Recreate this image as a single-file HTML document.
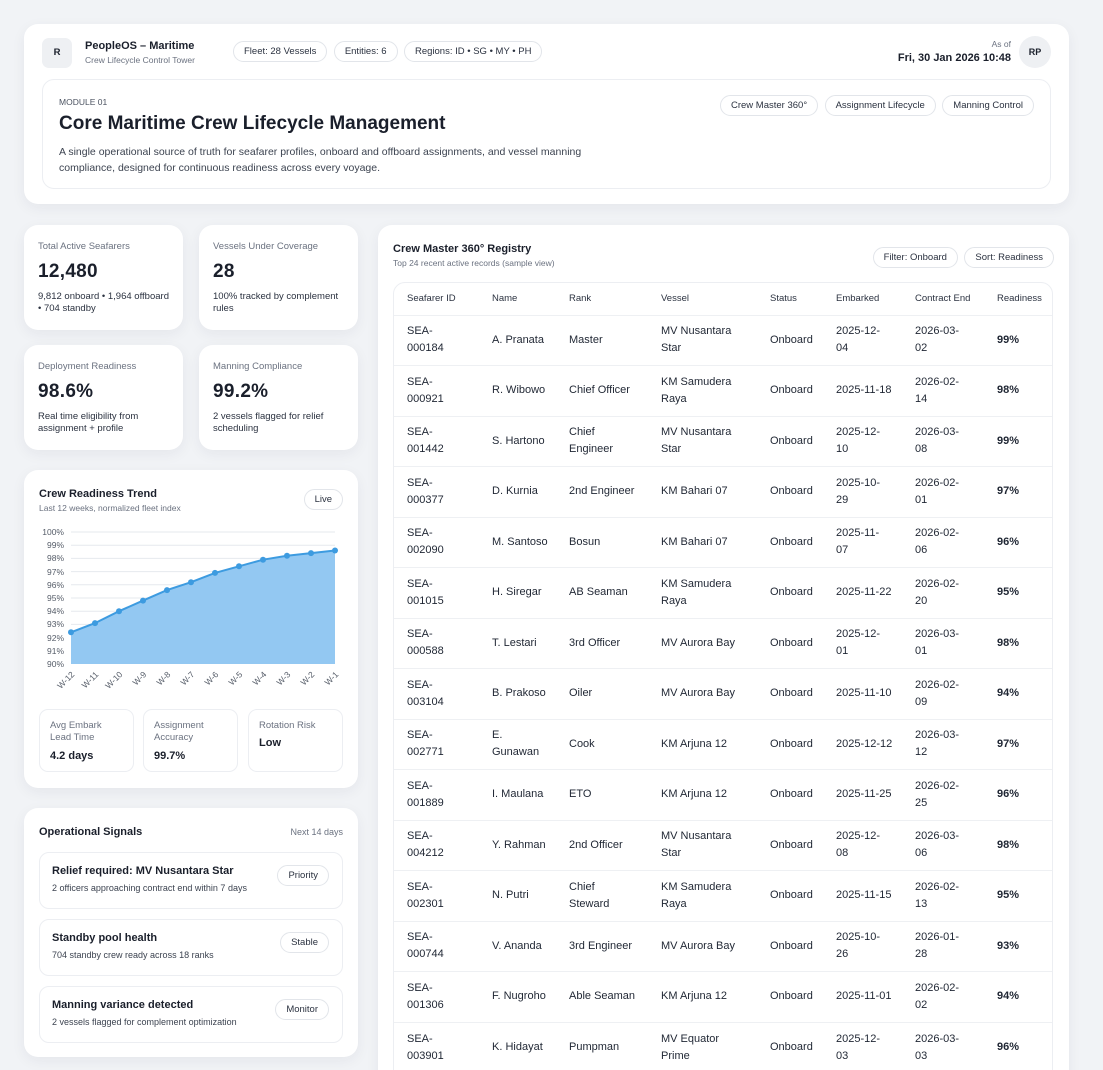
<!DOCTYPE html>
<html><head><meta charset="utf-8"><style>
*{box-sizing:border-box;margin:0;padding:0}
html,body{width:1103px;height:1070px;overflow:hidden}
body{background:#f1f3f6;font-family:"Liberation Sans",sans-serif;color:#1a1f2b;position:relative}
.card{position:absolute;background:#fff;border-radius:14px;box-shadow:0 4px 14px rgba(30,40,60,.06)}
.pill{display:inline-block;border:1px solid #e2e5ea;border-radius:14px;font-size:9.5px;color:#2b3240;padding:0 10px;height:21px;line-height:19px;background:#fff}
.abs{position:absolute}
.muted{color:#6b7280}
.stat{width:159px;height:105px;padding:16px 14px}
.stat .l{font-size:9.5px;color:#6b7280}
.stat .v{font-size:19px;font-weight:bold;margin-top:9px;letter-spacing:.3px}
.stat .s{font-size:9.5px;color:#2b3240;margin-top:8px;line-height:12px}
table{border-collapse:collapse;font-size:11px;color:#1f2633}
th{font-size:9.5px;font-weight:normal;color:#2b3240;text-align:left;height:32px;padding:0}
td{height:50.5px;border-top:1px solid #eef0f3;line-height:17px;padding:0}
.sig{position:absolute;left:15px;width:304px;height:57px;border:1px solid #eceef2;border-radius:10px;padding:0 12px}
.sig b{display:block;font-size:11px;margin-top:12px}
.sig span{font-size:9px;color:#3c4350;display:block;margin-top:6px}
.sig .pill{position:absolute;right:13px;top:12px}
.mini{position:absolute;top:239px;width:95px;height:63px;border:1px solid #eceef2;border-radius:9px;padding:10px 10px;font-size:9.5px;color:#6b7280;line-height:12px}
.mini b{display:block;color:#1a1f2b;font-size:11px;margin-top:6px}
</style></head><body>

<div class="card" style="left:24px;top:24px;width:1045px;height:180px">
  <div class="abs" style="left:18px;top:14px;width:30px;height:30px;border-radius:7px;background:#eef0f3;font-size:9.5px;font-weight:bold;text-align:center;line-height:30px">R</div>
  <div class="abs" style="left:61px;top:16px;font-size:11px;font-weight:bold">PeopleOS – Maritime</div>
  <div class="abs muted" style="left:61px;top:31px;font-size:8.5px">Crew Lifecycle Control Tower</div>
  <div class="abs" style="left:209px;top:17px"><span class="pill">Fleet: 28 Vessels</span> <span class="pill" style="margin-left:2px">Entities: 6</span> <span class="pill" style="margin-left:2px">Regions: ID • SG • MY • PH</span></div>
  <div class="abs muted" style="right:58px;top:15px;font-size:8.5px">As of</div>
  <div class="abs" style="right:58px;top:28px;font-size:11px;font-weight:bold">Fri, 30 Jan 2026 10:48</div>
  <div class="abs" style="right:18px;top:12px;width:32px;height:32px;border-radius:50%;background:#eef0f3;font-size:9px;font-weight:bold;text-align:center;line-height:32px">RP</div>
  <div class="abs" style="left:18px;top:55px;width:1009px;height:110px;border:1px solid #eceef2;border-radius:12px">
    <div class="abs muted" style="left:16px;top:17px;font-size:8.5px;color:#4b5260">MODULE 01</div>
    <div class="abs" style="left:16px;top:33px;font-size:19px;font-weight:bold">Core Maritime Crew Lifecycle Management</div>
    <div class="abs" style="left:16px;top:64px;width:560px;font-size:10.5px;line-height:16px;color:#3c4350">A single operational source of truth for seafarer profiles, onboard and offboard assignments, and vessel manning compliance, designed for continuous readiness across every voyage.</div>
    <div class="abs" style="right:16px;top:15px"><span class="pill">Crew Master 360°</span> <span class="pill" style="margin-left:2px">Assignment Lifecycle</span> <span class="pill" style="margin-left:2px">Manning Control</span></div>
  </div>
</div>

<div class="card stat" style="left:24px;top:225px"><div class="l">Total Active Seafarers</div><div class="v">12,480</div><div class="s">9,812 onboard • 1,964 offboard • 704 standby</div></div>
<div class="card stat" style="left:199px;top:225px"><div class="l">Vessels Under Coverage</div><div class="v">28</div><div class="s">100% tracked by complement rules</div></div>
<div class="card stat" style="left:24px;top:345px"><div class="l">Deployment Readiness</div><div class="v">98.6%</div><div class="s">Real time eligibility from assignment + profile</div></div>
<div class="card stat" style="left:199px;top:345px"><div class="l">Manning Compliance</div><div class="v">99.2%</div><div class="s">2 vessels flagged for relief scheduling</div></div>

<div class="card" style="left:24px;top:470px;width:334px;height:318px">
  <div class="abs" style="left:15px;top:18px;font-size:11px;font-weight:bold">Crew Readiness Trend</div>
  <div class="abs muted" style="left:15px;top:33px;font-size:8.5px">Last 12 weeks, normalized fleet index</div>
  <div class="abs pill" style="right:15px;top:19px">Live</div>
  <svg class="abs" style="left:0;top:0" width="334" height="240" font-family="Liberation Sans" font-size="8.5" fill="#555c68">
    <g stroke="#e6e9ee" stroke-width="1">
      <line x1="47" x2="311" y1="62" y2="62"/><line x1="47" x2="311" y1="75.2" y2="75.2"/><line x1="47" x2="311" y1="88.4" y2="88.4"/><line x1="47" x2="311" y1="101.6" y2="101.6"/><line x1="47" x2="311" y1="114.8" y2="114.8"/><line x1="47" x2="311" y1="128" y2="128"/><line x1="47" x2="311" y1="141.2" y2="141.2"/><line x1="47" x2="311" y1="154.4" y2="154.4"/><line x1="47" x2="311" y1="167.6" y2="167.6"/><line x1="47" x2="311" y1="180.8" y2="180.8"/>
    </g>
    <polygon fill="#93c8f2" points="47,194 47,162.3 71,153.1 95,141.2 119,130.6 143,120.1 167,112.2 191,102.9 215,96.3 239,89.7 263,85.8 287,83.1 311,80.5 311,194"/>
    <polyline fill="none" stroke="#3d9be0" stroke-width="2" points="47,162.3 71,153.1 95,141.2 119,130.6 143,120.1 167,112.2 191,102.9 215,96.3 239,89.7 263,85.8 287,83.1 311,80.5"/>
    <g fill="#3d9be0"><circle cx="47" cy="162.3" r="3"/><circle cx="71" cy="153.1" r="3"/><circle cx="95" cy="141.2" r="3"/><circle cx="119" cy="130.6" r="3"/><circle cx="143" cy="120.1" r="3"/><circle cx="167" cy="112.2" r="3"/><circle cx="191" cy="102.9" r="3"/><circle cx="215" cy="96.3" r="3"/><circle cx="239" cy="89.7" r="3"/><circle cx="263" cy="85.8" r="3"/><circle cx="287" cy="83.1" r="3"/><circle cx="311" cy="80.5" r="3"/></g>
    <g text-anchor="end">
      <text x="40" y="65">100%</text><text x="40" y="78">99%</text><text x="40" y="91">98%</text><text x="40" y="105">97%</text><text x="40" y="118">96%</text><text x="40" y="131">95%</text><text x="40" y="144">94%</text><text x="40" y="157">93%</text><text x="40" y="171">92%</text><text x="40" y="184">91%</text><text x="40" y="197">90%</text>
      <text transform="translate(51,205) rotate(-45)">W-12</text><text transform="translate(75,205) rotate(-45)">W-11</text><text transform="translate(99,205) rotate(-45)">W-10</text><text transform="translate(123,205) rotate(-45)">W-9</text><text transform="translate(147,205) rotate(-45)">W-8</text><text transform="translate(171,205) rotate(-45)">W-7</text><text transform="translate(195,205) rotate(-45)">W-6</text><text transform="translate(219,205) rotate(-45)">W-5</text><text transform="translate(243,205) rotate(-45)">W-4</text><text transform="translate(267,205) rotate(-45)">W-3</text><text transform="translate(291,205) rotate(-45)">W-2</text><text transform="translate(315,205) rotate(-45)">W-1</text>
    </g>
  </svg>
  <div class="mini" style="left:15px">Avg Embark Lead Time<b>4.2 days</b></div>
  <div class="mini" style="left:119px">Assignment Accuracy<b>99.7%</b></div>
  <div class="mini" style="left:224px">Rotation Risk<b style="margin-top:5px">Low</b></div>
</div>

<div class="card" style="left:24px;top:808px;width:334px;height:249px">
  <div class="abs" style="left:15px;top:18px;font-size:11px;font-weight:bold">Operational Signals</div>
  <div class="abs muted" style="right:15px;top:19px;font-size:9px">Next 14 days</div>
  <div class="sig" style="top:44px"><b>Relief required: MV Nusantara Star</b><span>2 officers approaching contract end within 7 days</span><div class="pill">Priority</div></div>
  <div class="sig" style="top:111px"><b>Standby pool health</b><span>704 standby crew ready across 18 ranks</span><div class="pill">Stable</div></div>
  <div class="sig" style="top:178px"><b>Manning variance detected</b><span>2 vessels flagged for complement optimization</span><div class="pill">Monitor</div></div>
</div>

<div class="card" style="left:378px;top:225px;width:691px;height:870px">
  <div class="abs" style="left:15px;top:18px;font-size:11px;font-weight:bold">Crew Master 360° Registry</div>
  <div class="abs muted" style="left:15px;top:33px;font-size:8.5px">Top 24 recent active records (sample view)</div>
  <div class="abs" style="right:15px;top:22px"><span class="pill">Filter: Onboard</span> <span class="pill" style="margin-left:2px">Sort: Readiness</span></div>
  <div class="abs" style="left:15px;top:57px;width:660px;height:820px;border:1px solid #eceef2;border-radius:12px;overflow:hidden">
  <table style="width:658px">
   <colgroup><col style="width:98px"><col style="width:77px"><col style="width:92px"><col style="width:109px"><col style="width:66px"><col style="width:79px"><col style="width:82px"><col></colgroup>
   <tr><th style="padding-left:13px">Seafarer ID</th><th>Name</th><th>Rank</th><th>Vessel</th><th>Status</th><th>Embarked</th><th>Contract End</th><th>Readiness</th></tr>
   <tr><td style="padding-left:13px">SEA-<br>000184</td><td>A. Pranata</td><td>Master</td><td>MV Nusantara<br>Star</td><td>Onboard</td><td>2025-12-<br>04</td><td>2026-03-<br>02</td><td><b>99%</b></td></tr>
   <tr><td style="padding-left:13px">SEA-<br>000921</td><td>R. Wibowo</td><td>Chief Officer</td><td>KM Samudera<br>Raya</td><td>Onboard</td><td>2025-11-18</td><td>2026-02-<br>14</td><td><b>98%</b></td></tr>
   <tr><td style="padding-left:13px">SEA-<br>001442</td><td>S. Hartono</td><td>Chief<br>Engineer</td><td>MV Nusantara<br>Star</td><td>Onboard</td><td>2025-12-<br>10</td><td>2026-03-<br>08</td><td><b>99%</b></td></tr>
   <tr><td style="padding-left:13px">SEA-<br>000377</td><td>D. Kurnia</td><td>2nd Engineer</td><td>KM Bahari 07</td><td>Onboard</td><td>2025-10-<br>29</td><td>2026-02-<br>01</td><td><b>97%</b></td></tr>
   <tr><td style="padding-left:13px">SEA-<br>002090</td><td>M. Santoso</td><td>Bosun</td><td>KM Bahari 07</td><td>Onboard</td><td>2025-11-<br>07</td><td>2026-02-<br>06</td><td><b>96%</b></td></tr>
   <tr><td style="padding-left:13px">SEA-<br>001015</td><td>H. Siregar</td><td>AB Seaman</td><td>KM Samudera<br>Raya</td><td>Onboard</td><td>2025-11-22</td><td>2026-02-<br>20</td><td><b>95%</b></td></tr>
   <tr><td style="padding-left:13px">SEA-<br>000588</td><td>T. Lestari</td><td>3rd Officer</td><td>MV Aurora Bay</td><td>Onboard</td><td>2025-12-<br>01</td><td>2026-03-<br>01</td><td><b>98%</b></td></tr>
   <tr><td style="padding-left:13px">SEA-<br>003104</td><td>B. Prakoso</td><td>Oiler</td><td>MV Aurora Bay</td><td>Onboard</td><td>2025-11-10</td><td>2026-02-<br>09</td><td><b>94%</b></td></tr>
   <tr><td style="padding-left:13px">SEA-<br>002771</td><td>E.<br>Gunawan</td><td>Cook</td><td>KM Arjuna 12</td><td>Onboard</td><td>2025-12-12</td><td>2026-03-<br>12</td><td><b>97%</b></td></tr>
   <tr><td style="padding-left:13px">SEA-<br>001889</td><td>I. Maulana</td><td>ETO</td><td>KM Arjuna 12</td><td>Onboard</td><td>2025-11-25</td><td>2026-02-<br>25</td><td><b>96%</b></td></tr>
   <tr><td style="padding-left:13px">SEA-<br>004212</td><td>Y. Rahman</td><td>2nd Officer</td><td>MV Nusantara<br>Star</td><td>Onboard</td><td>2025-12-<br>08</td><td>2026-03-<br>06</td><td><b>98%</b></td></tr>
   <tr><td style="padding-left:13px">SEA-<br>002301</td><td>N. Putri</td><td>Chief<br>Steward</td><td>KM Samudera<br>Raya</td><td>Onboard</td><td>2025-11-15</td><td>2026-02-<br>13</td><td><b>95%</b></td></tr>
   <tr><td style="padding-left:13px">SEA-<br>000744</td><td>V. Ananda</td><td>3rd Engineer</td><td>MV Aurora Bay</td><td>Onboard</td><td>2025-10-<br>26</td><td>2026-01-<br>28</td><td><b>93%</b></td></tr>
   <tr><td style="padding-left:13px">SEA-<br>001306</td><td>F. Nugroho</td><td>Able Seaman</td><td>KM Arjuna 12</td><td>Onboard</td><td>2025-11-01</td><td>2026-02-<br>02</td><td><b>94%</b></td></tr>
   <tr><td style="padding-left:13px">SEA-<br>003901</td><td>K. Hidayat</td><td>Pumpman</td><td>MV Equator<br>Prime</td><td>Onboard</td><td>2025-12-<br>03</td><td>2026-03-<br>03</td><td><b>96%</b></td></tr>
  </table>
  </div>
</div>
</body></html>
